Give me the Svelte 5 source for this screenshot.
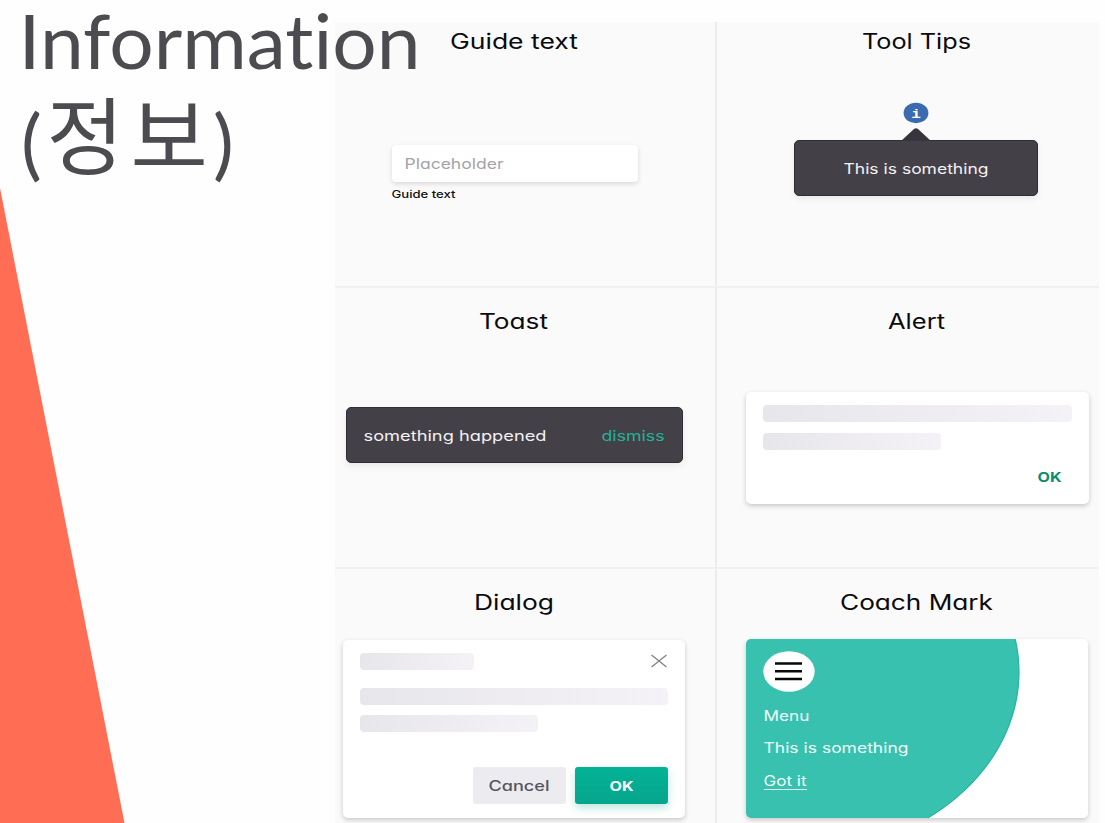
<script>
  const bar = 'bar';
</script>

{#snippet label(text, width, size, kind)}
  <svg class="label {kind}" {width} height={size} style:font-size="{size - 0.5}px">
    <text x="-0.5" y={size - 2.5} textLength={width} lengthAdjust="spacingAndGlyphs">{text}</text>
  </svg>
{/snippet}

{#snippet title(text, width)}
  <h2>
    <svg class="label heading" {width} height="16">
      <text x="0" y="16" textLength={width} lengthAdjust="spacingAndGlyphs">{text}</text>
    </svg>
  </h2>
{/snippet}

<main>
  <aside>
    <svg class="wedge" width="125" height="635" viewBox="0 0 125 635">
      <path d="M0 0 L124.5 635 H0Z" fill="#ff6e54" />
    </svg>
    <svg class="topic" width="430" height="200">
      <text x="18.5" y="68.7" font-size="75.5" textLength="402" lengthAdjust="spacingAndGlyphs">Information</text>
      <text class="ko" font-size="84"><tspan class="paren" x="21" y="171">(</tspan><tspan x="46.5" y="168">정</tspan><tspan x="130.5">보</tspan><tspan class="paren" x="213" y="171">)</tspan></text>
    </svg>
  </aside>

  <div class="panel">
    <section class="left first">
      {@render title('Guide text', 128)}
      <div class="field">{@render label('Placeholder', 99, 15, 'muted')}</div>
      <div class="hint">{@render label('Guide text', 64, 11, 'small')}</div>
    </section>

    <section class="right first">
      {@render title('Tool Tips', 109)}
      <svg class="info" width="26" height="22" viewBox="0 0 26 22">
        <ellipse cx="13" cy="11" rx="12.4" ry="10.2" fill="#3a6ab0" />
        <text x="8.2" y="15.7" textLength="9.6" lengthAdjust="spacingAndGlyphs">i</text>
      </svg>
      <svg class="arrow" width="30" height="13" viewBox="0 0 30 13">
        <path d="M0 13 L13 1 Q15 -.5 17 1 L30 13Z" fill="#38343b" />
      </svg>
      <div class="tooltip">{@render label('This is something', 145, 15, 'light')}</div>
    </section>

    <section class="left">
      {@render title('Toast', 69)}
      <div class="toast">
        {@render label('something happened', 183, 15, 'light')}
        {@render label('dismiss', 63, 15, 'green')}
      </div>
    </section>

    <section class="right">
      {@render title('Alert', 57)}
      <div class="card alert">
        <div class={bar}></div>
        <div class="{bar} medium"></div>
        <div class="alert-ok">{@render label('OK', 24, 14, 'confirm')}</div>
      </div>
    </section>

    <section class="left last">
      {@render title('Dialog', 80)}
      <div class="card dialog">
        <div class="dialog-head">
          <div class="{bar} short"></div>
          <svg width="18" height="14" viewBox="0 0 18 14">
            <path d="M1.5 1 L16.5 13 M16.5 1 L1.5 13" stroke="#85838b" stroke-width="1.4" fill="none" />
          </svg>
        </div>
        <div class={bar}></div>
        <div class="{bar} medium"></div>
        <div class="actions">
          <div class="button cancel">{@render label('Cancel', 61, 15, 'dim')}</div>
          <div class="button ok">{@render label('OK', 24, 14, 'strong')}</div>
        </div>
      </div>
    </section>

    <section class="right last">
      {@render title('Coach Mark', 153)}
      <div class="card coach">
        <svg class="menu" width="52" height="41" viewBox="0 0 52 41">
          <ellipse cx="26" cy="20.5" rx="25.7" ry="20.3" fill="#fff" />
          <path d="M12 12.5H39M12 20.2H39M12 28H39" stroke="#090909" stroke-width="2.6" />
        </svg>
        {@render label('Menu', 46, 15, 'white')}
        {@render label('This is something', 145, 15, 'white')}
        <div class="got">{@render label('Got it', 43, 15, 'white')}</div>
      </div>
    </section>
  </div>
</main>

<style>
  :global(body) { margin: 0; background: #fefefe; }
  main {
    display: flex;
    width: 1105px;
    height: 823px;
    overflow: hidden;
    background: #fefefe;
    font-family: Inter, "Noto Sans CJK KR", sans-serif;
  }
  svg { display: block; flex: none; }
  aside {
    position: relative;
    z-index: 1;
    display: flex;
    flex-direction: column;
    justify-content: flex-end;
    width: 335px;
    flex: none;
  }
  .topic { position: absolute; left: 0; top: 0; overflow: visible; fill: #4c4b50; font-family: Lato, sans-serif; font-variant-ligatures: none; }
  .ko { font-family: "Noto Sans CJK KR", sans-serif; font-weight: 400; }
  .paren { font-family: Lato, sans-serif; font-weight: 400; font-size: 78px; }
  .panel {
    display: grid;
    grid-template-columns: 382px 382px;
    grid-template-rows: 266px 281px 254px;
    width: 764px;
    margin-top: 22px;
    background: #fafafb;
  }
  section {
    box-sizing: border-box;
    min-width: 0;
    padding-top: 25px;
    border-bottom: 2px solid #f1f1f2;
  }
  .left { border-right: 2px solid #ececee; padding-left: 8px; }
  .right { padding-left: 28px; }
  .first { padding-top: 10.5px; }
  .last { padding-top: 24.5px; border-bottom: 0; }
  h2 { display: flex; justify-content: center; margin: 0; font-weight: 430; }
  .left h2 { width: 341px; }
  .right h2 { width: 343px; }
  .label { overflow: visible; fill: currentColor; font-feature-settings: "cv11", "ss03"; }
  .heading { font-size: 21px; color: #0b0b0c; }
  .muted { color: #a4a3a9; }
  .small { color: #111; font-weight: 500; }
  .light { color: #f2f1f3; }
  .green { color: #20b498; }
  .confirm { color: #0b8b6c; font-weight: 700; }
  .dim { color: #55535c; font-weight: 500; }
  .strong { color: #fff; font-weight: 700; }
  .white { color: #effffb; }

  .field {
    display: flex;
    align-items: center;
    box-sizing: border-box;
    width: 246px;
    height: 37px;
    margin: 96px 0 0 49px;
    padding-left: 13px;
    border-radius: 4px;
    background: #fff;
    box-shadow: 0 2px 5px #0002;
  }
  .hint { margin: 7.5px 0 0 49px; }
  .info { margin: 53.5px 0 0 158px; }
  .info text { fill: #fff; font: 700 13px "Liberation Mono", monospace; }
  .arrow { margin: 4px 0 -1px 156px; }
  .tooltip, .toast {
    display: flex;
    align-items: center;
    box-sizing: border-box;
    height: 56px;
    border: 1px solid #302d33;
    border-radius: 5px;
    background: #444047;
    box-shadow: 0 3px 6px #0001;
  }
  .tooltip { width: 244px; margin-left: 49px; justify-content: center; }
  .toast { width: 337px; margin: 78px 0 0 2.5px; padding: 0 17px; justify-content: space-between; }

  .card {
    box-sizing: border-box;
    width: 342px;
    border-radius: 5px;
    background: #fff;
    box-shadow: 0 2px 5px #0003;
  }
  .bar {
    height: 17px;
    border-radius: 4px;
    background: linear-gradient(90deg, #e7e6eb, #f4f2f7);
  }
  .medium { width: 178px; margin-top: 10.5px; }
  .short { width: 113.5px; }
  .alert { width: 343px; height: 112px; margin: 63px 0 0 .5px; padding: 13px 17px; }
  .alert-ok { display: flex; justify-content: flex-end; margin: 20px 10px 0 0; }
  .dialog { height: 178px; margin-top: 30px; padding: 13px 17px 0; }
  .dialog-head { display: flex; align-items: center; justify-content: space-between; margin-bottom: 18px; }
  .actions { display: flex; justify-content: flex-end; gap: 9px; margin-top: 35px; }
  .button {
    display: flex;
    align-items: center;
    justify-content: center;
    width: 93px;
    height: 37px;
    border-radius: 3px;
  }
  .cancel { background: #ecebf0; }
  .ok { background: linear-gradient(#04b397, #06a58b); box-shadow: 0 4px 8px #05a68b45; }
  .coach {
    display: flex;
    flex-direction: column;
    align-items: flex-start;
    height: 179px;
    margin: 29.5px 0 0 .5px;
    padding: 12px 18px;
    background: radial-gradient(ellipse 231px 184px at 43px 33px, #38c1af 99%, #25b39e 99.6%, #fff 100%);
  }
  .menu { margin: 0 0 15.5px -.5px; }
  .coach > .label { margin-bottom: 17.5px; }
  .got { padding-bottom: 1px; border-bottom: 1.5px solid #dffbf5; }
</style>
